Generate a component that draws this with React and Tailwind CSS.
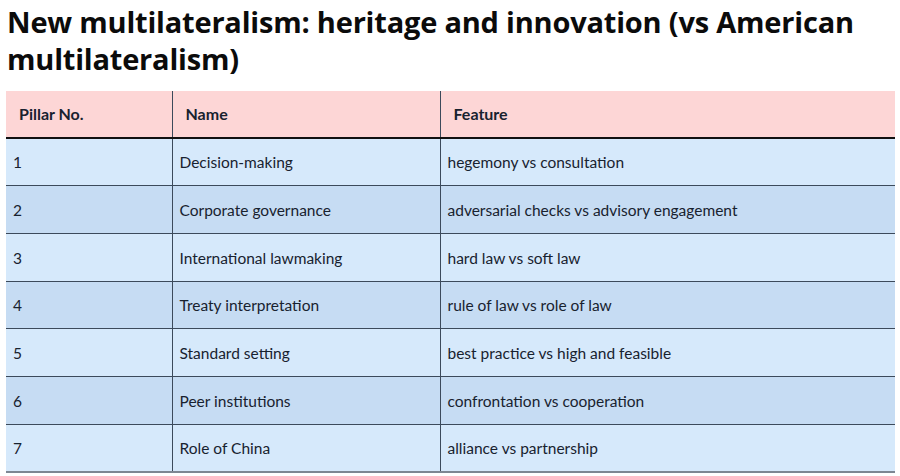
const rows = [
  ["1", "Decision-making", "hegemony vs consultation"],
  ["2", "Corporate governance", "adversarial checks vs advisory engagement"],
  ["3", "International lawmaking", "hard law vs soft law"],
  ["4", "Treaty interpretation", "rule of law vs role of law"],
  ["5", "Standard setting", "best practice vs high and feasible"],
  ["6", "Peer institutions", "confrontation vs cooperation"],
  ["7", "Role of China", "alliance vs partnership"],
];

export default function App() {
  return (
    <div className="w-[900px] h-[476px] overflow-hidden bg-white font-['Lato',sans-serif] text-[#18222f]">
      <h1 className="pl-[7px] pt-[3px] font-['Open_Sans',sans-serif] text-[29px] leading-[37px] font-bold text-[#0b0b0b] tracking-[-0.2px]">
        New multilateralism: heritage and innovation (vs American multilateralism)
      </h1>
      <table className="ml-[6px] mt-[14px] w-[889px] border-collapse table-fixed">
        <colgroup>
          <col className="w-[166px]" />
          <col className="w-[268px]" />
          <col className="w-[455px]" />
        </colgroup>
        <thead>
          <tr className="bg-[#fdd6d6] h-[47px] border-b-2 border-[#111]">
            <th className="text-left font-bold text-[16px] pl-[13px]">Pillar No.</th>
            <th className="text-left font-bold text-[16px] pl-[13px] border-l border-[#3c4a5b]">Name</th>
            <th className="text-left font-bold text-[16px] pl-[13px] border-l border-[#3c4a5b]">Feature</th>
          </tr>
        </thead>
        <tbody>
          {rows.map((r, i) => (
            <tr
              key={r[0]}
              className={`h-[47.7px] text-[15.5px] ${i % 2 === 1 ? "bg-[#c6dcf3]" : "bg-[#d6e9fb]"} ${
                i === rows.length - 1 ? "border-b-2 border-[#7d8793]" : "border-b border-[#3c4a5b]"
              }`}
            >
              <td className="pl-[7px] pt-[2px]">{r[0]}</td>
              <td className="pl-[7px] pt-[2px] border-l border-[#3c4a5b]">{r[1]}</td>
              <td className="pl-[7px] pt-[2px] border-l border-[#3c4a5b]">{r[2]}</td>
            </tr>
          ))}
        </tbody>
      </table>
    </div>
  );
}
